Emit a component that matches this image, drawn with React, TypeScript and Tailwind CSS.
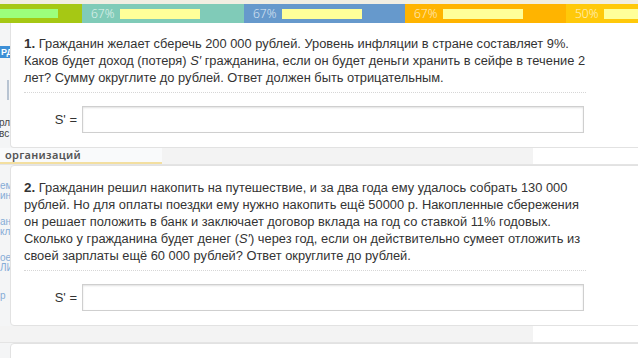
import React from "react";

const segments = [
  { pct: "67%", bg: "bg-[#80cbb8]", width: "w-[162px]" },
  { pct: "67%", bg: "bg-[#6699cc]", width: "w-[161px]" },
  { pct: "67%", bg: "bg-[#ffb400]", width: "w-[161px]" },
  { pct: "50%", bg: "bg-[#ffc90a]", width: "flex-1" },
];

function ProgressStrip() {
  return (
    <div className="flex h-[19px]">
      <div className="w-[82px] bg-[#a6c814] flex items-center">
        <div className="h-[9px] w-[58px] bg-[#9cff7c]" />
      </div>
      {segments.map((s, i) => (
        <div key={i} className={`${s.width} ${s.bg} flex items-center pl-[9px] gap-[6px] overflow-hidden`}>
          <span className="text-[12px] leading-none font-light text-white/80 font-['Open_Sans',sans-serif]">{s.pct}</span>
          <div className="h-[10px] w-[80px] shrink-0 bg-[#ffff99]" />
        </div>
      ))}
    </div>
  );
}

function AnswerRow() {
  return (
    <>
      <div className="w-[562px] border-t border-dotted border-[#d6d6d6] mt-[6px]" />
      <div className="flex items-center mt-[13px]">
        <span className="w-[58px] text-right pr-[5px] text-[13px] text-[#333]">S' =</span>
        <div className="w-[502px] h-[27px] bg-white border border-[#cfcfcf] shadow-[inset_0_1px_2px_rgba(0,0,0,0.12)]" />
      </div>
    </>
  );
}

function Band({ label }: { label?: string }) {
  return (
    <div className="flex h-[17px] border-b border-[#e4e4e4]">
      <div className={`w-[162px] flex items-center pl-[5px] ${label ? "bg-[#f9fafb] border-b-2 border-[#f3dfa0]" : "bg-[#f3f3f3]"}`}>
        {label && (
          <span className="text-[11px] font-semibold text-[#555] tracking-[0.3px] font-['Noto_Sans',sans-serif]">{label}</span>
        )}
      </div>
      <div className="w-[371px] bg-[#f3f3f3]" />
      <div className="flex-1 bg-white" />
    </div>
  );
}

export default function App() {
  return (
    <div className="relative w-[638px] h-[358px] overflow-hidden bg-[#f4f5f6] font-['Liberation_Sans',Arial,sans-serif]">
      <div className="h-[4px] bg-[#f1eee2]" />
      <ProgressStrip />

      {/* faded page underneath the cards */}
      <div className="absolute left-0 top-[46px] w-[14px] h-[12px] bg-[#3d8fd6] text-white text-[9px] leading-[12px] font-bold pl-[1px]">РД</div>
      <div className="absolute left-[7px] top-[80px] w-[2px] h-[20px] bg-[#b8c4d2]" />
      <div className="absolute left-[-1px] top-[118px] text-[10px] leading-[10px] text-[#444]">рлі</div>
      <div className="absolute left-[-1px] top-[129px] text-[10px] leading-[10px] text-[#444]">вс</div>
      <div className="absolute left-0 top-[181px] text-[10px] leading-[10px] text-[#86acd6]">ем<br />ин</div>
      <div className="absolute left-0 top-[217px] text-[10px] leading-[10px] text-[#86acd6]">ан<br />кл</div>
      <div className="absolute left-0 top-[253px] text-[10px] leading-[10px] text-[#86acd6]">ое<br />ЛИ</div>
      <div className="absolute left-0 top-[291px] text-[10px] leading-[10px] text-[#86acd6]">р</div>

      <div className="relative z-10">
        <div className="ml-[10px] w-[660px] bg-white border border-t-0 border-[#e2e2e2] rounded-b-[4px] pl-[13px] pt-[12px] pb-[14px] text-[12.85px] leading-[17px] text-[#333]">
          <p>
            <b className="text-[13.5px]">1.</b> Гражданин желает сберечь 200 000 рублей. Уровень инфляции в стране составляет 9%.<br />
            Каков будет доход (потеря) <i>S′</i> гражданина, если он будет деньги хранить в сейфе в течение 2<br />
            лет? Сумму округлите до рублей. Ответ должен быть отрицательным.
          </p>
          <AnswerRow />
        </div>

        <Band label="организаций" />

        <div className="ml-[10px] w-[660px] bg-white border border-[#e2e2e2] rounded-[4px] pl-[13px] pt-[13px] pb-[14px] text-[12.85px] leading-[17px] text-[#333]">
          <p>
            <b className="text-[13.5px]">2.</b> Гражданин решил накопить на путешествие, и за два года ему удалось собрать 130 000<br />
            рублей. Но для оплаты поездки ему нужно накопить ещё 50000 р. Накопленные сбережения<br />
            он решает положить в банк и заключает договор вклада на год со ставкой 11% годовых.<br />
            Сколько у гражданина будет денег (<i>S′</i>) через год, если он действительно сумеет отложить из<br />
            своей зарплаты ещё 60 000 рублей? Ответ округлите до рублей.
          </p>
          <AnswerRow />
        </div>

        <Band />

        <div className="ml-[10px] w-[660px] h-[40px] bg-white border border-[#e2e2e2] rounded-[4px]" />
      </div>
    </div>
  );
}
